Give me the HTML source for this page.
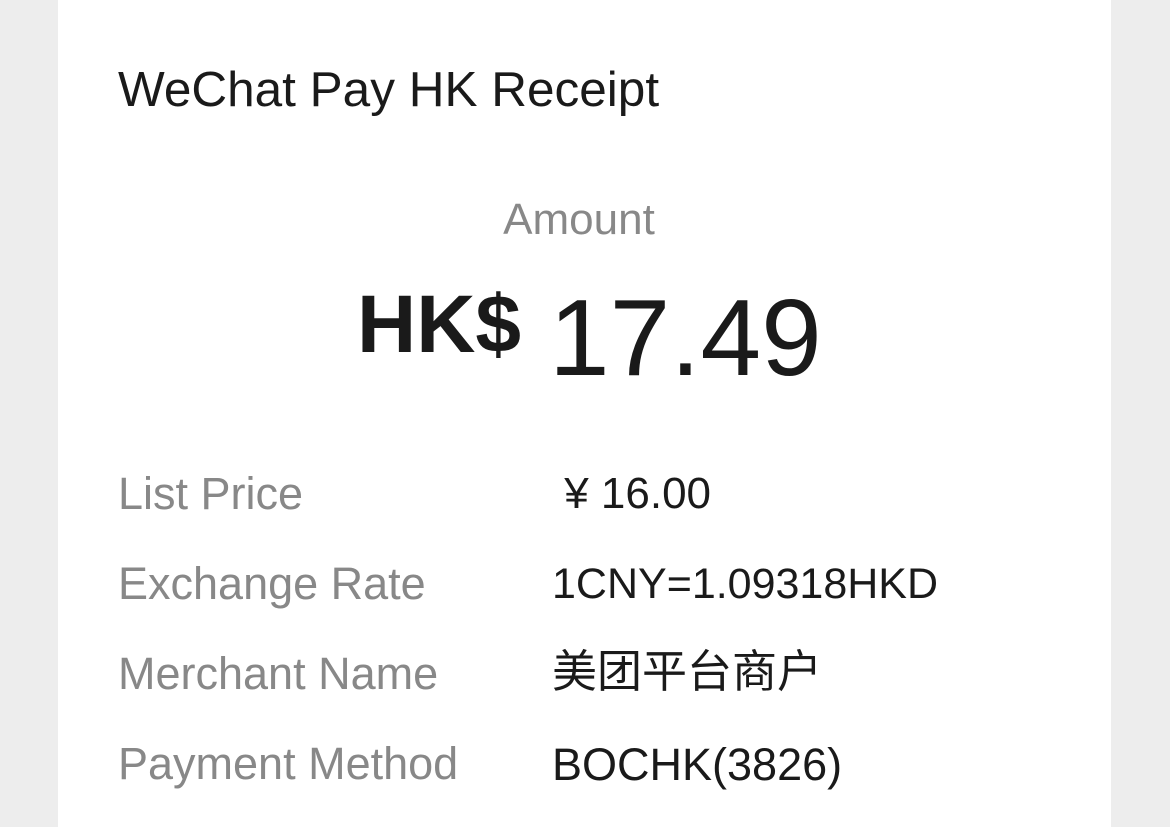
<!DOCTYPE html>
<html><head><meta charset="utf-8"><style>
html,body{margin:0;padding:0;width:1170px;height:827px;background:#ededed;overflow:hidden}
body{font-family:"Liberation Sans","Noto Sans CJK SC",sans-serif;position:relative}
.card{position:absolute;left:58px;top:0;width:1053px;height:827px;background:#fff}
.t{position:absolute;white-space:nowrap;line-height:1}
.lab{color:#888;font-size:45px;left:118px}
.val{color:#1a1a1a;font-size:44px;left:552px}
</style></head><body>
<div class="card"></div>
<div class="t" style="left:118px;top:65px;font-size:49.5px;color:#1a1a1a">WeChat Pay HK Receipt</div>
<div class="t" style="left:0;width:1158px;text-align:center;top:198px;font-size:44px;color:#888">Amount</div>
<div class="t" style="left:357px;top:284px;font-size:82px;font-weight:bold;color:#1a1a1a">HK$</div>
<div class="t" style="left:549px;top:284px;font-size:109px;color:#1a1a1a">17.49</div>
<div class="t lab" style="top:471px">List Price</div>
<div class="t val" style="top:472px">&nbsp;¥ 16.00</div>
<div class="t lab" style="top:561px">Exchange Rate</div>
<div class="t val" style="top:563px;font-size:43px">1CNY=1.09318HKD</div>
<div class="t lab" style="top:651px">Merchant Name</div>
<div class="t val" style="top:649px;font-size:45px">美团平台商户</div>
<div class="t lab" style="top:741px">Payment Method</div>
<div class="t val" style="top:742px;font-size:45px">BOCHK(3826)</div>
</body></html>
